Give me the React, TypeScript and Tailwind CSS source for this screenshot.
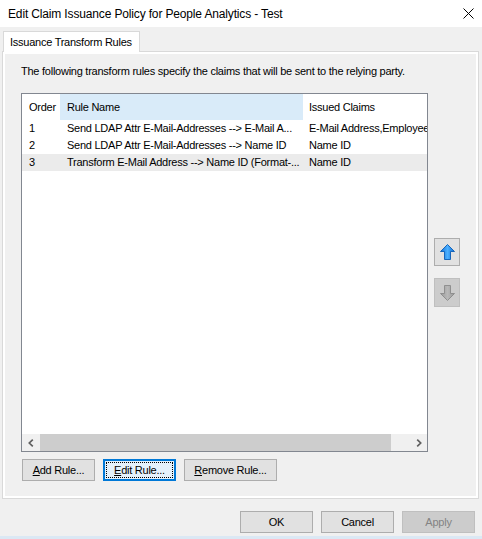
import React from "react";

function Btn({
  children,
  w,
  variant = "normal",
}: {
  children: React.ReactNode;
  w: string;
  variant?: "normal" | "focus" | "disabled";
}) {
  if (variant === "focus") {
    return (
      <div className={`${w} h-[22px] relative border-2 border-[#0078d7] bg-[#e5f1fb] flex items-center justify-center text-[11px]`}>
        <div className="absolute inset-[1px] border border-dotted border-black" />
        <span>{children}</span>
      </div>
    );
  }
  if (variant === "disabled") {
    return (
      <div className={`${w} h-[22px] border border-[#bfbfbf] bg-[#cccccc] text-[#838383] flex items-center justify-center text-[11px]`}>
        {children}
      </div>
    );
  }
  return (
    <div className={`${w} h-[22px] border border-[#adadad] bg-[#e1e1e1] flex items-center justify-center text-[11px]`}>
      {children}
    </div>
  );
}

function Arrow({ up }: { up: boolean }) {
  const id = up ? "gup" : "gdn";
  return (
    <svg width="15" height="16" viewBox="0 0 15 16" className={up ? "" : "rotate-180"}>
      <defs>
        <linearGradient id={id} x1="0" x2="1" y1="0" y2="0">
          {up ? (
            <>
              <stop offset="0" stopColor="#0d6fd6" />
              <stop offset="0.5" stopColor="#4cb0ff" />
              <stop offset="1" stopColor="#0d6fd6" />
            </>
          ) : (
            <>
              <stop offset="0" stopColor="#9a9a9a" />
              <stop offset="0.5" stopColor="#b8b8b8" />
              <stop offset="1" stopColor="#9a9a9a" />
            </>
          )}
        </linearGradient>
      </defs>
      <polygon
        points="7.5,0.5 14.5,7.5 10.5,7.5 10.5,15.5 4.5,15.5 4.5,7.5 0.5,7.5"
        fill={`url(#${id})`}
        stroke={up ? "#0a5bb5" : "#8a8a8a"}
        strokeWidth="0.9"
        strokeLinejoin="round"
      />
    </svg>
  );
}

const rows = [
  ["1", "Send LDAP Attr E-Mail-Addresses --> E-Mail A...", "E-Mail Address,EmployeeID", false],
  ["2", "Send LDAP Attr E-Mail-Addresses --> Name ID", "Name ID", false],
  ["3", "Transform E-Mail Address --> Name ID (Format-...", "Name ID", true],
] as const;

export default function App() {
  return (
    <div className="w-[482px] h-[539px] bg-[#f0f0f0] flex flex-col text-black overflow-hidden font-['Liberation_Sans',Arial,sans-serif] tracking-[-0.25px]">
      {/* Title bar */}
      <div className="h-[27px] bg-white flex items-center justify-between pl-[8px] pr-[8px] shrink-0">
        <span className="text-[12px] tracking-[-0.15px]">Edit Claim Issuance Policy for People Analytics - Test</span>
        <svg width="11" height="11" viewBox="0 0 11 11">
          <line x1="0.5" y1="0.5" x2="10.5" y2="10.5" stroke="#000" strokeWidth="1" />
          <line x1="10.5" y1="0.5" x2="0.5" y2="10.5" stroke="#000" strokeWidth="1" />
        </svg>
      </div>
      <div className="h-[4px] shrink-0" />
      {/* Tab */}
      <div className="flex pl-[3px] -mb-px relative z-10 shrink-0">
        <div className="h-[21px] w-[137px] bg-white border border-b-0 border-[#d9d9d9] text-[11px] pl-[6px] flex items-center">
          Issuance Transform Rules
        </div>
      </div>
      {/* Panel */}
      <div className="ml-[2px] w-[477px] h-[448px] border border-[#d9d9d9] bg-white p-[2px] flex shrink-0">
        <div className="flex-1 bg-[#f0f0f0] flex flex-col pl-[16px] pt-[11px]">
          <div className="text-[11px] leading-[13px]">
            The following transform rules specify the claims that will be sent to the relying party.
          </div>
          <div className="flex mt-[15px]">
            {/* List view */}
            <div className="w-[407px] h-[359px] border border-[#828790] bg-white flex flex-col overflow-hidden text-[11px]">
              <div className="h-[26px] flex shrink-0">
                <div className="w-[38px] pl-[7px] flex items-center shrink-0">Order</div>
                <div className="w-[243px] pl-[7px] flex items-center bg-[#d9ebf9] shrink-0">Rule Name</div>
                <div className="flex-1 pl-[6px] flex items-center whitespace-nowrap">Issued Claims</div>
              </div>
              {rows.map(([o, n, c, sel]) => (
                <div key={o} className={`h-[17px] flex shrink-0 ${sel ? "bg-[#ebebeb]" : ""}`}>
                  <div className="w-[38px] pl-[7px] flex items-center shrink-0">{o}</div>
                  <div className="w-[243px] pl-[7px] flex items-center shrink-0 whitespace-nowrap overflow-hidden">{n}</div>
                  <div className="flex-1 pl-[6px] flex items-center whitespace-nowrap overflow-hidden">{c}</div>
                </div>
              ))}
              <div className="flex-1" />
              {/* horizontal scrollbar */}
              <div className="h-[17px] flex bg-[#f0f0f0] shrink-0">
                <div className="w-[17px] flex items-center justify-center">
                  <svg width="6" height="8" viewBox="0 0 6 8">
                    <polyline points="4.8,0.6 1.3,4 4.8,7.4" fill="none" stroke="#606060" strokeWidth="1.7" />
                  </svg>
                </div>
                <div className="flex-1 flex">
                  <div className="ml-[1px] w-[351px] h-full bg-[#cdcdcd]" />
                </div>
                <div className="w-[17px] flex items-center justify-center">
                  <svg width="6" height="8" viewBox="0 0 6 8">
                    <polyline points="1.2,0.6 4.7,4 1.2,7.4" fill="none" stroke="#606060" strokeWidth="1.7" />
                  </svg>
                </div>
              </div>
            </div>
            {/* Up/down */}
            <div className="ml-[6px] flex flex-col pt-[145px]">
              <div className="w-[26px] h-[28px] border border-[#adadad] bg-[#e1e1e1] flex items-center justify-center">
                <Arrow up />
              </div>
              <div className="mt-[12px] w-[26px] h-[29px] border border-[#bfbfbf] bg-[#cccccc] flex items-center justify-center">
                <Arrow up={false} />
              </div>
            </div>
          </div>
          <div className="flex gap-[8px] mt-[7px] ml-[1px]">
            <Btn w="w-[73px]">
              <span><u>A</u>dd Rule...</span>
            </Btn>
            <Btn w="w-[73px]" variant="focus">
              <span><u>E</u>dit Rule...</span>
            </Btn>
            <Btn w="w-[93px]">
              <span><u>R</u>emove Rule...</span>
            </Btn>
          </div>
        </div>
      </div>
      {/* Bottom buttons */}
      <div className="flex justify-end gap-[8px] pr-[7px] mt-[12px] shrink-0">
        <Btn w="w-[73px]">OK</Btn>
        <Btn w="w-[73px]">Cancel</Btn>
        <Btn w="w-[73px]" variant="disabled">Apply</Btn>
      </div>
      <div className="flex-1" />
      <div className="h-[3px] bg-[#dbe8f4] shrink-0" />
    </div>
  );
}
